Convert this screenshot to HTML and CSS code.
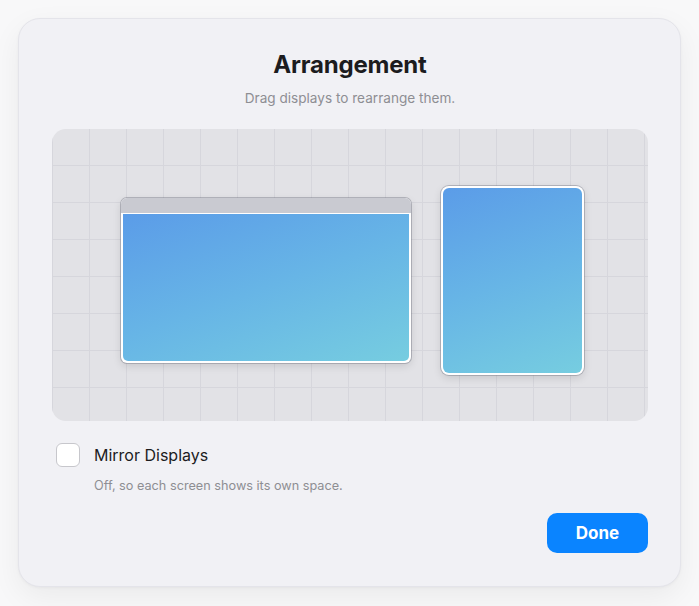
FILE: index.html
```html
<!DOCTYPE html>
<html lang="en">
<head>
<meta charset="utf-8">
<title>Arrangement</title>
<link rel="stylesheet" href="styles.css">
</head>
<body>
<div class="page">
  <section class="card">
    <h1 class="title">Arrangement</h1>
    <p class="subtitle">Drag displays to rearrange them.</p>
    <div class="arena">
      <div class="display display-wide">
        <div class="menubar"></div>
        <div class="screen"></div>
      </div>
      <div class="display display-tall">
        <div class="screen"></div>
      </div>
    </div>
    <label class="option">
      <span class="checkbox"></span>
      <span class="option-label">Mirror Displays</span>
    </label>
    <p class="option-note">Off, so each screen shows its own space.</p>
    <div class="actions">
      <button class="done" type="button">Done</button>
    </div>
  </section>
</div>
</body>
</html>
```

FILE: styles.css
```css
* { box-sizing: border-box; }

html, body {
  margin: 0;
  padding: 0;
  background: #f8f8f9;
  font-family: Inter, "Noto Sans", sans-serif;
}

.page {
  padding: 18px;
  height: 606px;
}

.card {
  width: 663px;
  height: 569px;
  background: #f1f1f5;
  border-radius: 22px;
  border: 1px solid #e4e4ea;
  box-shadow: 0 10px 30px rgba(0, 0, 0, 0.06), 0 1px 3px rgba(0, 0, 0, 0.04);
  padding: 31px 32px 33px 33px;
  display: flex;
  flex-direction: column;
}

.title {
  margin: 0;
  text-align: center;
  font-size: 24px;
  line-height: 29px;
  font-weight: 700;
  color: #1c1c1e;
  letter-spacing: -0.2px;
}

.subtitle {
  margin: 11px 0 0;
  text-align: center;
  font-size: 13.6px;
  line-height: 17px;
  color: #8e8e93;
}

.arena {
  margin-top: 22px;
  height: 292px;
  border-radius: 14px;
  background-color: #e2e2e6;
  background-image:
    linear-gradient(to right, transparent 36px, #d6d6dc 36px),
    linear-gradient(to bottom, transparent 36px, #d6d6dc 36px);
  background-size: 37px 37px;
  background-position: 1px 0;
  display: flex;
  align-items: center;
  justify-content: center;
  gap: 30px;
  padding: 11px 0 0 5px;
}

.display {
  display: flex;
  flex-direction: column;
  box-shadow: 0 0 0 1px rgba(120, 122, 135, 0.45), 0 3px 8px rgba(0, 0, 0, 0.12);
  background: #ffffff;
}

.display-wide {
  width: 290px;
  height: 165px;
  border-radius: 6px;
}

.menubar {
  height: 15px;
  background: #c9cad1;
  border-radius: 6px 6px 0 0;
}

.display-wide .screen {
  flex: 1;
  margin: 1px 2px 2px;
  border-radius: 0 0 5px 5px;
}

.display-tall {
  width: 143px;
  height: 189px;
  border-radius: 8px;
  padding: 2px;
}

.display-tall .screen {
  flex: 1;
  border-radius: 6px;
}

.screen {
  background: linear-gradient(160deg, #5b9ce8 0%, #67b5e6 50%, #76cde0 100%);
}

.option {
  margin-top: 22px;
  display: flex;
  align-items: center;
  gap: 14px;
  padding-left: 4px;
}

.checkbox {
  width: 24px;
  height: 24px;
  border-radius: 6px;
  background: #ffffff;
  border: 1.5px solid #c7c7cc;
}

.option-label {
  font-size: 16px;
  color: #1c1c1e;
}

.option-note {
  margin: 11px 0 0 42px;
  font-size: 12.7px;
  line-height: 16px;
  color: #8e8e93;
}

.actions {
  margin-top: auto;
  display: flex;
  justify-content: flex-end;
}

.done {
  width: 101px;
  height: 40px;
  border: none;
  border-radius: 10px;
  background: #0a84ff;
  color: #ffffff;
  font-family: Inter, "Noto Sans", sans-serif;
  font-size: 17px;
  font-weight: 700;
}
```
